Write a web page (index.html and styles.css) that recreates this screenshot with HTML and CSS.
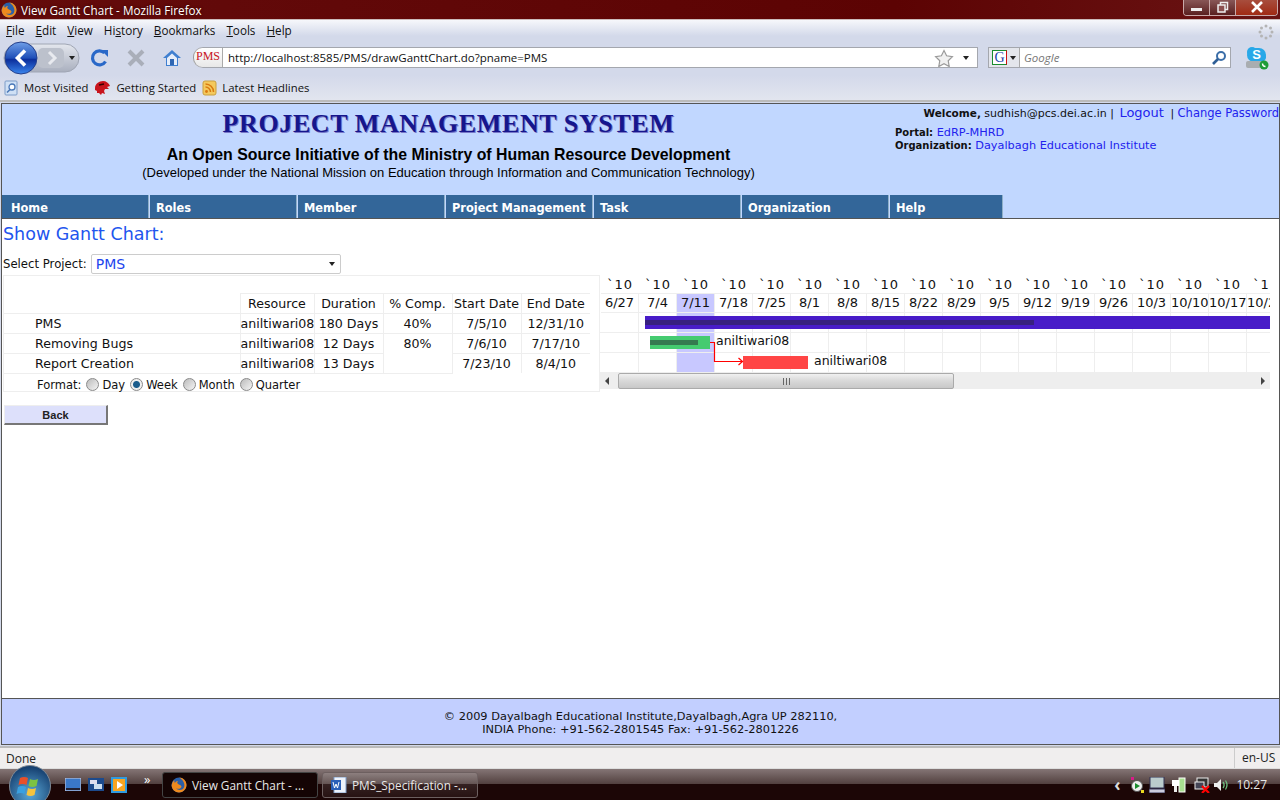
FILE: index.html

```html
<!DOCTYPE html>
<html>
	<head>
		<title>View Gantt Chart - Mozilla Firefox</title>
		<meta charset="UTF-8">
		<link rel="stylesheet" href="styles.css">
	</head>
	<body>
		<div class="titlebar">
			<svg class="fx-icon" width="16" height="16" viewBox="0 0 16 16"><circle cx="8" cy="8" r="7.5" fill="#2a5fa8"/><path d="M8 .5c4 0 7.500 3.200 7.500 7.500S12 15.500 8 15.500 1 12.500.6 8.500C1 6 2 4 3.500 3 3 4.500 3.500 5.500 4 6c.5-1.500 2-2 3-2-1 1-1 2 0 3 1 .8 3 .8 3.500 2.500C10 12 7 12.500 5 11c1.500 2.500 6 3 8-.5C14.500 7 12 2.500 8 .5z" fill="#ee8a1e"/></svg>
			<span class="title-text">View Gantt Chart - Mozilla Firefox</span>
			<div class="win-btns">
				<span class="win-btn"><svg width="12" height="12" viewBox="0 0 12 12"><rect x="0" y="7" width="11" height="3" fill="#eee"/></svg></span>
				<span class="win-btn"><svg width="12" height="12" viewBox="0 0 12 12"><rect x="3.500" y="1.500" width="7" height="7" fill="none" stroke="#eee" stroke-width="1.500"/><rect x="1" y="4" width="7" height="7" fill="#8b5050" stroke="#eee" stroke-width="1.500"/></svg></span>
				<span class="win-btn win-close"><svg width="12" height="12" viewBox="0 0 12 12"><path d="M1 1l10 10M11 1L1 11" stroke="#fff" stroke-width="2.600"/></svg></span>
			</div>
		</div>

		<div class="menubar">
			<span><u>F</u>ile</span><span><u>E</u>dit</span><span><u>V</u>iew</span><span>Hi<u>s</u>tory</span><span><u>B</u>ookmarks</span><span><u>T</u>ools</span><span><u>H</u>elp</span>
			<svg class="throbber" width="16" height="16" viewBox="0 0 16 16"><g fill="#b4b4b4"><circle cx="8" cy="2" r="1.500"/><circle cx="12.500" cy="4" r="1.500"/><circle cx="14" cy="8" r="1.500"/><circle cx="12.500" cy="12" r="1.500"/><circle cx="8" cy="14" r="1.500"/><circle cx="3.500" cy="12" r="1.500"/><circle cx="2" cy="8" r="1.500"/><circle cx="3.500" cy="4" r="1.500"/></g></svg>
		</div>

		<div class="navbar">
			<div class="backfwd">
				<svg width="78" height="34" viewBox="0 0 78 34">
					<defs>
						<linearGradient id="backg" x1="0" y1="0" x2="0" y2="1"><stop offset="0" stop-color="#6f9fe8"/><stop offset=".5" stop-color="#1f4fb8"/><stop offset=".55" stop-color="#0c2f9c"/><stop offset="1" stop-color="#3a86ee"/></linearGradient>
						<linearGradient id="pill" x1="0" y1="0" x2="0" y2="1"><stop offset="0" stop-color="#e4e7ee"/><stop offset="1" stop-color="#a9afbe"/></linearGradient>
					</defs>
					<rect x="2" y="3" width="75" height="28" rx="14" fill="url(#pill)" stroke="#a0a6b4"/>
					<rect x="36" y="7" width="26" height="20" rx="5" fill="#bcc1cc"/>
					<path d="M47 11l6 6-6 6" fill="none" stroke="#e8eaef" stroke-width="3"/>
					<path d="M67 15h6l-3 4z" fill="#222"/>
					<circle cx="19" cy="17" r="16" fill="url(#backg)" stroke="#25408c"/>
					<path d="M23 9.500L15.500 17l7.500 7.500" fill="none" stroke="#fff" stroke-width="3.600"/>
				</svg>
			</div>
			<svg class="nav-icon" width="20" height="20" viewBox="0 0 20 20"><path d="M15.500 13.500A7 7 0 1 1 14.500 5" fill="none" stroke="#2968c8" stroke-width="3.200"/><path d="M11 2h7v7z" fill="#2968c8"/></svg>
			<svg class="nav-icon" width="20" height="20" viewBox="0 0 20 20"><path d="M3 3l14 14M17 3L3 17" stroke="#a9aeb9" stroke-width="4"/></svg>
			<svg class="nav-icon" width="20" height="20" viewBox="0 0 20 20"><path d="M1 10L10 2l9 8h-3v8H4v-8z" fill="#3f7fd0"/><path d="M5 10l5-4.500 5 4.500v7H5z" fill="#e6eefa"/><rect x="8" y="11" width="4" height="6" fill="#2f67b3"/></svg>
			<div class="urlbar">
				<span class="site-id">PMS</span>
				<span class="url-text">http://localhost:8585/PMS/drawGanttChart.do?pname=PMS</span>
				<svg width="20" height="18" viewBox="0 0 20 18"><path d="M10 1.500l2.600 5.300 5.800.8-4.200 4.100 1 5.800-5.200-2.700-5.200 2.700 1-5.800L1.600 7.600l5.800-.8z" fill="#f0f0f0" stroke="#9a9a9a" stroke-width="1.200"/></svg>
				<span class="caret"></span>
			</div>
			<div class="searchbar">
				<span class="engine"><span class="g-logo">G</span><span class="caret"></span></span>
				<span class="search-text">Google</span>
				<svg width="16" height="16" viewBox="0 0 16 16"><circle cx="10" cy="6" r="4" fill="none" stroke="#3b6ea8" stroke-width="2"/><path d="M7 9l-5 5" stroke="#2f5f96" stroke-width="2.600"/></svg>
			</div>
			<svg class="skype" width="24" height="24" viewBox="0 0 24 24"><circle cx="7" cy="6" r="5" fill="#28a8e8"/><circle cx="16" cy="11" r="5" fill="#28a8e8"/><rect x="2" y="2" width="19" height="14" rx="7" fill="#28a8e8"/><text x="11.500" y="13" font-family="Liberation Sans" font-size="13" font-weight="bold" fill="#fff" text-anchor="middle">S</text><rect x="1" y="15" width="17" height="7" rx="2" fill="#a9adb0"/><circle cx="19" cy="19" r="4.500" fill="#1f9c36"/><path d="M17.500 17.500c0 2 1 3 3 3" fill="none" stroke="#fff" stroke-width="1.400"/></svg>
		</div>

		<div class="bookmarks">
			<span class="bm"><svg width="15" height="16" viewBox="0 0 15 16"><rect x="1" y="1" width="12" height="14" rx="1" fill="#cfe0f5" stroke="#7d9cc8"/><circle cx="8" cy="7" r="3" fill="#fff" stroke="#4a78b8" stroke-width="1.300"/><path d="M6 9.500l-3 3" stroke="#4a78b8" stroke-width="1.600"/></svg>Most Visited</span>
			<span class="bm"><svg width="17" height="16" viewBox="0 0 17 16"><path d="M1 8c0-4 4-7 8-7 3 0 6 2 7 5l-3 1 2 2-4 0-1 2 1 3-3-1-1 2-2-2-2 0 0-2-2-1z" fill="#c8141c"/><path d="M5 5l5-1" stroke="#3a0000" stroke-width="1.500"/></svg>Getting Started</span>
			<span class="bm"><svg width="15" height="16" viewBox="0 0 15 16"><rect x="1" y="1" width="13" height="14" rx="2" fill="#f4c95d" stroke="#c9a040"/><circle cx="4.500" cy="11.500" r="1.400" fill="#d97a10"/><path d="M3.500 7a5 5 0 0 1 5 5M3.500 4a8 8 0 0 1 8 8" fill="none" stroke="#d97a10" stroke-width="1.500"/></svg>Latest Headlines</span>
		</div>

		<div class="page">
			<div class="head">
				<div class="head-main">
					<h1>Project Management System</h1>
					<h2>An Open Source Initiative of the Ministry of Human Resource Development</h2>
					<p>(Developed under the National Mission on Education through Information and Communication Technology)</p>
				</div>
				<div class="head-user">
					<div class="welcome"><b>Welcome,</b> sudhish@pcs.dei.ac.in | <a class="logout">Logout</a> | <a>Change Password</a></div>
					<div class="org"><b>Portal:</b> <a>EdRP-MHRD</a></div>
					<div class="org"><b>Organization:</b> <a>Dayalbagh Educational Institute</a></div>
				</div>
			</div>
			<ul class="menu">
				<li>Home</li><li>Roles</li><li>Member</li><li>Project Management</li><li>Task</li><li>Organization</li><li>Help</li>
			</ul>

			<div class="main">
				<div class="heading">Show Gantt Chart:</div>
				<div class="picker">
					<label>Select Project:</label>
					<div class="select">PMS<span class="caret"></span></div>
				</div>
				<div class="gantt">
					<div class="task-side">
						<table class="tasks">
							<colgroup>
								<col class="col-name"><col class="col-res"><col class="col-num"><col class="col-num"><col class="col-num"><col class="col-num">
							</colgroup>
							<tr class="blank"><td colspan="6"></td></tr>
							<tr>
								<td class="name-head"></td><th>Resource</th><th>Duration</th><th>% Comp.</th><th>Start Date</th><th class="last">End Date</th>
							</tr>
							<tr>
								<td class="name">PMS</td><td>aniltiwari08</td><td>180 Days</td><td>40%</td><td>7/5/10</td><td class="last">12/31/10</td>
							</tr>
							<tr>
								<td class="name">Removing Bugs</td><td>aniltiwari08</td><td>12 Days</td><td class="open-bottom">80%</td><td>7/6/10</td><td class="last">7/17/10</td>
							</tr>
							<tr>
								<td class="name">Report Creation</td><td>aniltiwari08</td><td class="open-right">13 Days</td><td class="open-top"></td><td class="open-bottom">7/23/10</td><td class="last open-bottom">8/4/10</td>
							</tr>
						</table>
						<div class="format">
							Format:
							<label><span class="radio"></span>Day</label>
							<label><span class="radio on"></span>Week</label>
							<label><span class="radio"></span>Month</label>
							<label><span class="radio"></span>Quarter</label>
						</div>
					</div>
					<div class="chart">
						<div class="weeks years">
							<span>`10</span><span>`10</span><span>`10</span><span>`10</span><span>`10</span><span>`10</span><span>`10</span><span>`10</span><span>`10</span><span>`10</span><span>`10</span><span>`10</span><span>`10</span><span>`10</span><span>`10</span><span>`10</span><span>`10</span><span>`10</span>
						</div>
						<div class="weeks dates">
							<span>6/27</span><span>7/4</span><span class="today">7/11</span><span>7/18</span><span>7/25</span><span>8/1</span><span>8/8</span><span>8/15</span><span>8/22</span><span>8/29</span><span>9/5</span><span>9/12</span><span>9/19</span><span>9/26</span><span>10/3</span><span>10/10</span><span>10/17</span><span>10/24</span>
						</div>
						<div class="bars">
							<div class="today-col"></div>
							<div class="row"><div class="bar bar-pms"><div class="done"></div></div></div>
							<div class="row"><div class="bar bar-bugs"><div class="done"></div></div><span class="who who-bugs">aniltiwari08</span></div>
							<div class="row"><div class="bar bar-report"></div><span class="who who-report">aniltiwari08</span></div>
							<svg class="link" width="40" height="24" viewBox="0 0 40 24"><path d="M0 .5h4.500v19H32" fill="none" stroke="#f00" stroke-width="1.200"/><path d="M28.500 16l4 3.500-4 3.500" fill="none" stroke="#f00" stroke-width="1.200"/></svg>
						</div>
						<div class="hscroll">
							<span class="arrow arrow-left"></span>
							<div class="thumb"><span class="grip"></span></div>
							<span class="arrow arrow-right"></span>
						</div>
					</div>
				</div>
				<button class="back">Back</button>
			</div>

			<div class="foot">
				© 2009 Dayalbagh Educational Institute,Dayalbagh,Agra UP 282110,<br>
				INDIA Phone: +91-562-2801545 Fax: +91-562-2801226
			</div>
		</div>

		<div class="statusbar"><span class="done-text">Done</span><span class="locale">en-US</span></div>

		<div class="taskbar">
			<svg class="orb" width="44" height="44" viewBox="0 0 44 44">
				<defs><radialGradient id="orbg" cx=".5" cy=".7" r=".7"><stop offset="0" stop-color="#5aa8d8"/><stop offset="1" stop-color="#123a6a"/></radialGradient></defs>
				<circle cx="22" cy="22" r="20.500" fill="url(#orbg)" stroke="#7e8a96"/>
				<path d="M12 14c3-1.500 6-1 8 0l-1.500 7c-2-1-5-1.500-8 0z" fill="#e8502a"/>
				<path d="M22 15c2 1 5 1.500 8 0l-1.500 7c-3 1.500-6 1-8 0z" fill="#7cc242"/>
				<path d="M10 23c3-1.500 6-1 8 0l-1.500 7c-2-1-5-1.500-8 0z" fill="#3aa0e0"/>
				<path d="M20 24c2 1 5 1.500 8 0l-1.500 7c-3 1.500-6 1-8 0z" fill="#f6c33c"/>
			</svg>
			<div class="quick">
				<svg width="16" height="13" viewBox="0 0 16 13"><rect width="16" height="13" fill="#3a78c8" stroke="#ccd"/><rect x="1" y="10" width="14" height="2" fill="#223"/></svg>
				<svg width="16" height="13" viewBox="0 0 16 13"><rect width="16" height="13" fill="#1c4a8c"/><rect x="2" y="2" width="7" height="4" fill="#dde"/><rect x="6" y="6" width="8" height="5" fill="#cde"/></svg>
				<svg width="16" height="16" viewBox="0 0 16 16"><rect width="16" height="16" fill="#2f9be0"/><rect x="2" y="2" width="12" height="12" fill="#f7a520"/><path d="M6 4l6 4-6 4z" fill="#fff"/></svg>
				<span class="more">»</span>
			</div>
			<div class="task active">
				<svg width="16" height="16" viewBox="0 0 16 16"><circle cx="8" cy="8" r="7.500" fill="#2a5fa8"/><path d="M8 .5c4 0 7.500 3.200 7.500 7.500S12 15.500 8 15.500 1 12.500.6 8.500C1 6 2 4 3.500 3 3 4.500 3.500 5.500 4 6c.5-1.500 2-2 3-2-1 1-1 2 0 3 1 .8 3 .8 3.500 2.500C10 12 7 12.500 5 11c1.500 2.500 6 3 8-.5C14.500 7 12 2.500 8 .5z" fill="#ee8a1e"/></svg>
				View Gantt Chart - ...
			</div>
			<div class="task">
				<svg width="16" height="16" viewBox="0 0 16 16"><rect x="3" y="0" width="12" height="16" fill="#eef2fa" stroke="#7d9cc8"/><rect x="0" y="3" width="10" height="10" fill="#2a5fb8"/><path d="M2 5l1.500 6 1.500-4 1.500 4L8 5" fill="none" stroke="#fff"/></svg>
				PMS_Specification -...
			</div>
			<div class="tray">
				<span class="tray-arrow">‹</span>
				<svg width="16" height="16" viewBox="0 0 16 16"><circle cx="7" cy="9" r="5.500" fill="#eee" stroke="#555"/><path d="M5 6l5 3-5 3z" fill="#1a8c2e"/><rect x="1" y="0" width="3" height="3" fill="#d81b8a"/><rect x="11" y="13" width="3" height="3" fill="#e8d820"/></svg>
				<svg width="16" height="16" viewBox="0 0 16 16"><rect x="1" y="0" width="14" height="11" fill="#bcc" stroke="#335"/><rect x="0" y="12" width="16" height="4" fill="#ccd" stroke="#335"/></svg>
				<svg class="tray-gap" width="15" height="16" viewBox="0 0 15 16"><rect x="8" y="1" width="6" height="14" fill="#a8e090" stroke="#fff"/><rect x="1" y="3" width="7" height="6" fill="#fff"/><rect x="3" y="9" width="3" height="6" fill="#eee"/></svg>
				<svg class="tray-net" width="16" height="16" viewBox="0 0 16 16"><rect x="3" y="1" width="11" height="9" fill="#333" stroke="#eee"/><rect x="1" y="5" width="9" height="7" fill="#445" stroke="#eee"/><path d="M8 9l7 7M15 9l-7 7" stroke="#f00" stroke-width="2.200"/></svg>
				<svg width="16" height="16" viewBox="0 0 16 16"><path d="M1 6h3l4-4v12l-4-4H1z" fill="#eee"/><path d="M10 5c1.500 2 1.500 4 0 6M12.500 3.500c2 3 2 6 0 9" fill="none" stroke="#6fc080" stroke-width="1.300"/></svg>
				<span class="clock">10:27</span>
			</div>
		</div>
	</body>
</html>
```

FILE: styles.css

```css
/* common */
html, body {
	margin: 0; padding: 0; height: 800px; overflow: hidden; background-color: #d3d9ea;
}
body {
	display: flex; flex-direction: column; font-family: "Open Sans", "Noto Sans", sans-serif; color: #000;
}
a {
	color: #2222ee;
}
svg {
	flex: none; display: block;
}
.caret {
	display: inline-block; border-top: 4px solid #222; border-left: 3.5px solid transparent; border-right: 3.5px solid transparent;
}

/* window chrome */
.titlebar {
	height: 20px; display: flex; align-items: center; padding-left: 1px; background: linear-gradient(90deg, #640b0b, #5c0303 70%, #6a1414); border-bottom: 1px solid #cbb;
	box-sizing: border-box; color: #fff; font-size: 11.7px; flex: none;
}
.title-text {
	margin-left: 4px; text-shadow: 0 0 3px #300;
}
.win-btns {
	margin-left: auto; margin-right: 2px; display: flex; height: 16px; margin-top: -4px; border: 1px solid #c9a9a9; border-top: none; border-radius: 0 0 4px 4px; overflow: hidden;
}
.win-btn {
	width: 25px; display: flex; align-items: center; justify-content: center; background: linear-gradient(#8b5a5a, #5a2020); border-right: 1px solid #c9a9a9;
}
.win-close {
	width: 41px; border-right: none; background: linear-gradient(#a85040, #a02a14);
}
.menubar {
	height: 20px; flex: none; display: flex; align-items: center; padding-left: 6px; gap: 11px; font-size: 11.7px; color: #111; background: linear-gradient(#f6f7fb, #d3d9ea 80%);
}
.throbber {
	margin-left: auto; margin-right: 6px; margin-top: 3px;
}
.navbar {
	height: 35px; flex: none; display: flex; align-items: center; padding-left: 2px; font-size: 12px;
}
.backfwd {
	width: 88px; flex: none;
}
.nav-icon {
	margin-right: 16px;
}
.urlbar {
	margin-left: -5px; width: 785px; height: 21px; flex: none; box-sizing: border-box; display: flex; align-items: center; background-color: #fff; border: 1px solid #a4a7ae; border-left: none; border-radius: 10px 0 0 10px; padding-right: 8px;
}
.site-id {
	width: 30px; height: 19px; flex: none; background: linear-gradient(#fff, #e8e8e8); border-right: 1px solid #aaa; border-left: 1px solid #999; border-radius: 9px 0 0 9px; box-sizing: border-box; text-align: center; font-family: "Liberation Serif", serif; font-size: 12px; line-height: 17px; color: #c8141c;
}
.url-text {
	flex: 1; padding-left: 5px; font-size: 11.5px; color: #111;
}
.urlbar .caret {
	margin-left: 9px;
}
.searchbar {
	margin-left: 10px; width: 243px; height: 21px; flex: none; box-sizing: border-box; display: flex; align-items: center; background-color: #fff; border: 1px solid #a4a7ae; padding-right: 3px;
}
.engine {
	width: 31px; height: 19px; flex: none; display: flex; align-items: center; gap: 3px; padding-left: 3px; box-sizing: border-box; background-color: #e4e6ec; border-right: 1px solid #aaa;
}
.g-logo {
	width: 15px; height: 15px; box-sizing: border-box; border: 1px solid; border-color: #1a8c2e #d01010 #1a8c2e #1a8c2e; background-color: #fff; font-family: "Liberation Serif", serif; font-size: 14px; line-height: 13px; text-align: center; color: #1c3fa8;
}
.search-text {
	flex: 1; padding-left: 4px; font-style: italic; color: #777; font-size: 11.5px;
}
.skype {
	margin-left: 14px;
}
.bookmarks {
	height: 27px; flex: none; display: flex; align-items: center; padding-left: 4px; gap: 6px; font-size: 11.3px; color: #111; background: linear-gradient(#d3d9ea, #e2e5ef); border-bottom: 2px solid #bbb; box-sizing: border-box;
}
.bm {
	display: flex; align-items: center; gap: 5px;
}

/* page */
.page {
	flex: 1; margin-left: 1px; margin-top: 1px; display: flex; flex-direction: column; background-color: #fff; border: 1px solid #555; font-family: "DejaVu Sans", sans-serif; min-height: 0;
}
.head {
	height: 91px; flex: none; display: flex; background-color: #c1d7ff;
}
.head-main {
	width: 893px; flex: none; text-align: center; color: #000;
}
h1 {
	margin: 3px 0 0 0; font-family: "Liberation Serif", serif; font-size: 26px; line-height: 34px; font-weight: bold; text-transform: uppercase; letter-spacing: .6px; color: #16168c; text-shadow: 1px 1px 0 #7777c8;
}
h2 {
	margin: 4px 0 0 0; font-family: "Liberation Sans", sans-serif; font-size: 15.85px; line-height: 20px;
}
.head-main p {
	margin: 0; font-family: "Liberation Sans", sans-serif; font-size: 13px; line-height: 16px;
}
.head-user {
	flex: 1; font-size: 11px; color: #111; padding-top: 1px;
}
.welcome {
	text-align: right; white-space: nowrap; line-height: 16px; margin-bottom: 4px; font-size: 11px;
}
.welcome b {
	font-size: 10.5px;
}
.welcome a {
	font-size: 11.5px;
}
.welcome .logout {
	font-size: 13px; margin: 0 3px 0 2px;
}
.org {
	line-height: 13px; font-size: 11.3px;
}
.org b {
	font-size: 10px;
}
.menu {
	list-style: none; margin: 0; padding: 0; height: 23px; flex: none; display: flex; background-color: #c1d7ff;
}
.menu li {
	width: 147px; box-sizing: border-box; padding: 5px 0 0 6px; margin-right: 1px; background-color: #336699; color: #fff; font-weight: bold; font-size: 11.4px; line-height: 16px; border-right: 1px solid #8fb0c8; white-space: nowrap;
}
.menu li:first-child {
	padding-left: 9px;
}
.menu li:last-child {
	width: 113px;
}
.main {
	flex: 1; min-height: 0; border-top: 1px solid #555; padding: 5px 0 0 1px;
}
.heading {
	font-size: 17.5px; line-height: 20px; color: #2255ee;
}
.picker {
	display: flex; align-items: center; margin-top: 9px; gap: 4px; font-size: 11.7px; color: #111; height: 21px;
}
.select {
	width: 250px; height: 20px; box-sizing: border-box; border: 1px solid #ccc; border-radius: 2px; display: flex; align-items: center; justify-content: space-between; padding: 0 5px 0 4px; color: #2244ee; font-size: 14px; background-color: #fff;
}

/* gantt */
.gantt {
	display: flex; margin-top: 1px;
}
.task-side {
	width: 597px; flex: none; box-sizing: border-box; border: 1px solid #eee; height: 117px;
}
.tasks {
	border-collapse: collapse; font-size: 12.6px; color: #111; table-layout: fixed; width: 586px;
}
.col-name {
	width: 236px;
}
.col-res {
	width: 74px;
}
.col-num {
	width: 69px;
}
.tasks td, .tasks th {
	font-weight: normal; text-align: center; border: 1px solid #eee; height: 20px; padding: 0; white-space: nowrap; box-sizing: border-box;
}
.tasks .blank td {
	height: 17px; border: none;
}
.tasks td.name {
	text-align: left; padding-left: 31px; border-left: none;
}
.tasks td.name-head {
	border: none; border-bottom: 1px solid #eee;
}
.tasks .last {
	border-right: none;
}
.tasks .open-bottom {
	border-bottom: none;
}
.tasks .open-top {
	border-top: none;
}
.tasks .open-right {
	border-right: none;
}
.format {
	padding: 5px 0 0 33px; height: 18px; box-sizing: border-box; display: flex; align-items: center; gap: 5px; font-size: 11.5px; color: #111;
}
.format label {
	display: flex; align-items: center; gap: 3px;
}
.radio {
	width: 11px; height: 11px; border-radius: 50%; border: 1px solid #8a8a8a; background: linear-gradient(135deg, #bbb, #f5f5f5); margin-top: -2px;
}
.radio.on {
	background: radial-gradient(circle, #1a5c8c 0 3px, #eee 4px);
}
.chart {
	width: 670px; flex: none; overflow: hidden; font-size: 13px; color: #111;
}
.weeks {
	display: grid; grid-template-columns: repeat(18, 38px); width: 684px; margin-left: 1px; text-align: center;
}
.years {
	height: 18px; line-height: 20px; letter-spacing: 1px;
}
.dates {
	height: 18px; line-height: 18px; border-top: 1px solid #eee; border-bottom: 1px solid #eee;
}
.dates span {
	border-right: 1px solid #eee; box-sizing: border-box; white-space: nowrap;
}
.dates .today {
	background-color: #c8c8ff;
}
.bars {
	position: relative; height: 60px; background-image: repeating-linear-gradient(90deg, transparent 0 37px, #eee 37px 38px); background-position: 1px 0;
}
.row {
	height: 20px; box-sizing: border-box; border-bottom: 1px solid #eee; position: relative;
}
.today-col {
	position: absolute; left: 77px; top: 0; width: 37px; height: 59px; background-color: #c8c8ff;
}
.bar {
	position: absolute; top: 3px; height: 13px;
}
.done {
	height: 5px; margin-top: 4px; position: absolute; top: 0; left: 0;
}
.bar-pms {
	left: 45px; right: 0; background-color: #481cc8;
}
.bar-pms .done {
	width: 389px; background-color: #37207f;
}
.bar-bugs {
	left: 50px; width: 60px; background-color: #45cb70;
}
.bar-bugs .done {
	width: 48px; background-color: #357a50;
}
.bar-report {
	left: 143px; width: 65px; background-color: #ff4545;
}
.who {
	position: absolute; top: 0; line-height: 16px; font-size: 12.5px;
}
.who-bugs {
	left: 116px;
}
.who-report {
	left: 214px;
}
.link {
	position: absolute; left: 110px; top: 29px;
}
.hscroll {
	height: 16px; background-color: #eee; display: flex; align-items: center; position: relative;
}
.arrow {
	width: 0; height: 0; border-top: 4px solid transparent; border-bottom: 4px solid transparent; position: absolute; top: 4px;
}
.arrow-left {
	left: 5px; border-right: 4px solid #444;
}
.arrow-right {
	right: 5px; border-left: 4px solid #444;
}
.thumb {
	margin-left: 18px; width: 334px; height: 14px; border: 1px solid #aaa; border-radius: 2px; background: linear-gradient(#f0f0f0, #d8d8d8 50%, #c8c8c8); display: flex; align-items: center; justify-content: center;
}
.grip {
	width: 7px; height: 7px; background-image: repeating-linear-gradient(90deg, #666 0 1px, transparent 1px 3px);
}
.back {
	display: block; margin: 13px 0 0 1px; width: 104px; height: 20px; border: none; border-top: 1px solid #eee; border-left: 1px solid #eee; border-right: 2px solid #777; border-bottom: 2px solid #777; background-color: #dde0fb; font-family: "Liberation Sans", sans-serif; font-weight: bold; font-size: 11px; color: #222; padding: 0;
}
.foot {
	height: 46px; flex: none; box-sizing: border-box; border-top: 1px solid #555; background-color: #c2cfff; text-align: center; font-size: 11.35px; line-height: 13px; padding-top: 11px; color: #111;
}

/* status and taskbar */
.statusbar {
	height: 23px; flex: none; box-sizing: border-box; display: flex; justify-content: space-between; align-items: center; background-color: #f0eeee; border-top: 2px solid #bbb; border-bottom: 1px solid #ddd; font-size: 12px; color: #222; margin-top: 1px;
}
.done-text {
	padding-left: 6px;
}
.locale {
	width: 46px; box-sizing: border-box; border-left: 1px solid #ccc; padding-left: 7px; line-height: 20px;
}
.taskbar {
	height: 31px; flex: none; display: flex; align-items: center; position: relative; color: #e8e8e8; font-size: 12px; background: linear-gradient(#847575, #52403f 48%, #1c0606 50%, #1c0606);
}
.orb {
	position: absolute; left: 8px; top: -5px;
}
.quick {
	margin-left: 65px; width: 97px; flex: none; display: flex; align-items: center; gap: 7px;
}
.more {
	font-size: 13px; color: #fff; margin-left: 10px; margin-top: -12px;
}
.task {
	width: 156px; height: 26px; flex: none; box-sizing: border-box; display: flex; align-items: center; gap: 5px; padding-left: 8px; margin-right: 4px; border: 1px solid #6d6060; border-radius: 3px; background: linear-gradient(rgba(255, 255, 255, .16), rgba(255, 255, 255, .05)); white-space: nowrap; font-size: 11.8px;
}
.task.active {
	background: #140404; border-color: #444;
}
.tray {
	margin-left: auto; display: flex; align-items: center; gap: 3px; padding-right: 13px;
}
.tray-arrow {
	font-size: 17px; font-weight: bold; color: #ddd; margin-right: 7px; line-height: 16px;
}
.tray-gap {
	margin-left: 3px;
}
.tray-net {
	margin-left: 5px;
}
.clock {
	margin-left: 4px; font-size: 12px;
}
```
